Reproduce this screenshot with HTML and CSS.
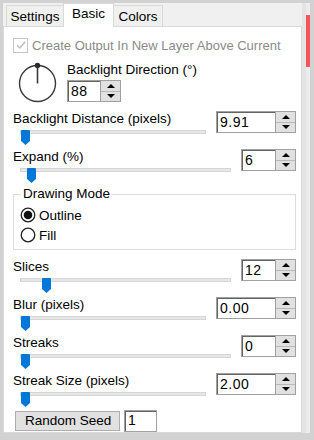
FILE: index.html
```html
<!DOCTYPE html>
<html>
<head>
<meta charset="utf-8">
<link rel="stylesheet" href="styles.css">
</head>
<body>
<div class="window">
  <div class="main">
    <div class="tabs">
      <div class="tab t-settings">Settings</div>
      <div class="tab t-basic sel">Basic</div>
      <div class="tab t-colors">Colors</div>
    </div>
    <div class="panel">
      <div class="check-row">
        <span class="cbox"><svg width="12" height="12" viewBox="0 0 12 12"><path d="M2 6.2 L4.8 9 L10.2 2.8" fill="none" stroke="#bdbdbd" stroke-width="1.4"/></svg></span>
        <span class="dis">Create Output In New Layer Above Current</span>
      </div>

      <div class="dial-row">
        <svg class="dial" width="40" height="42" viewBox="0 0 40 42">
          <circle cx="20.5" cy="21.5" r="18" fill="none" stroke="#3a3a3a" stroke-width="1.4"/>
          <line x1="20.5" y1="3.5" x2="20.5" y2="21.5" stroke="#3a3a3a" stroke-width="1.6"/>
          <circle cx="20.5" cy="3.5" r="2.7" fill="#2a2a2a"/>
        </svg>
        <div class="dial-side">
          <div class="label">Backlight Direction (°)</div>
          <div class="spin dialspin"><div class="val">88</div><div class="btns"><span class="up"></span><span class="dn"></span></div></div>
        </div>
      </div>

      <div class="srow">
        <div class="sl">
          <div class="label">Backlight Distance (pixels)</div>
          <div class="slider"><div class="track"></div><svg class="thumb" style="left:1px" width="9" height="15" viewBox="0 0 9 15"><path d="M1 0H8Q9 0 9 1V11L4.5 15L0 11V1Q0 0 1 0Z" fill="#0078d7"/></svg></div>
        </div>
        <div class="spin wide"><div class="val">9.91</div><div class="btns"><span class="up"></span><span class="dn"></span></div></div>
      </div>

      <div class="srow">
        <div class="sl">
          <div class="label">Expand (%)</div>
          <div class="slider"><div class="track"></div><svg class="thumb" style="left:7px" width="9" height="15" viewBox="0 0 9 15"><path d="M1 0H8Q9 0 9 1V11L4.5 15L0 11V1Q0 0 1 0Z" fill="#0078d7"/></svg></div>
        </div>
        <div class="spin narrow"><div class="val">6</div><div class="btns"><span class="up"></span><span class="dn"></span></div></div>
      </div>

      <div class="group">
        <div class="glabel">Drawing Mode</div>
        <div class="radio-row">
          <svg width="16" height="16" viewBox="0 0 16 16"><circle cx="8" cy="8" r="6.8" fill="#fff" stroke="#222" stroke-width="1.3"/><circle cx="8" cy="8" r="4.3" fill="#111"/></svg>
          <span>Outline</span>
        </div>
        <div class="radio-row">
          <svg width="16" height="16" viewBox="0 0 16 16"><circle cx="8" cy="8" r="6.8" fill="#fff" stroke="#222" stroke-width="1.3"/></svg>
          <span>Fill</span>
        </div>
      </div>

      <div class="srow first-after-group">
        <div class="sl">
          <div class="label">Slices</div>
          <div class="slider"><div class="track"></div><svg class="thumb" style="left:22px" width="9" height="15" viewBox="0 0 9 15"><path d="M1 0H8Q9 0 9 1V11L4.5 15L0 11V1Q0 0 1 0Z" fill="#0078d7"/></svg></div>
        </div>
        <div class="spin narrow"><div class="val">12</div><div class="btns"><span class="up"></span><span class="dn"></span></div></div>
      </div>

      <div class="srow">
        <div class="sl">
          <div class="label">Blur (pixels)</div>
          <div class="slider"><div class="track"></div><svg class="thumb" style="left:1px" width="9" height="15" viewBox="0 0 9 15"><path d="M1 0H8Q9 0 9 1V11L4.5 15L0 11V1Q0 0 1 0Z" fill="#0078d7"/></svg></div>
        </div>
        <div class="spin wide"><div class="val">0.00</div><div class="btns"><span class="up"></span><span class="dn"></span></div></div>
      </div>

      <div class="srow">
        <div class="sl">
          <div class="label">Streaks</div>
          <div class="slider"><div class="track"></div><svg class="thumb" style="left:1px" width="9" height="15" viewBox="0 0 9 15"><path d="M1 0H8Q9 0 9 1V11L4.5 15L0 11V1Q0 0 1 0Z" fill="#0078d7"/></svg></div>
        </div>
        <div class="spin narrow"><div class="val">0</div><div class="btns"><span class="up"></span><span class="dn"></span></div></div>
      </div>

      <div class="srow">
        <div class="sl">
          <div class="label">Streak Size (pixels)</div>
          <div class="slider"><div class="track"></div><svg class="thumb" style="left:1px" width="9" height="15" viewBox="0 0 9 15"><path d="M1 0H8Q9 0 9 1V11L4.5 15L0 11V1Q0 0 1 0Z" fill="#0078d7"/></svg></div>
        </div>
        <div class="spin wide"><div class="val">2.00</div><div class="btns"><span class="up"></span><span class="dn"></span></div></div>
      </div>

      <div class="seed-row">
        <div class="btn">Random Seed</div>
        <div class="seed-input">1</div>
      </div>
    </div>
  </div>
  <div class="side">
    <div class="side-light"></div>
    <div class="side-bar"><div class="side-red"></div></div>
  </div>
</div>
</body>
</html>
```

FILE: styles.css
```css
* { box-sizing: border-box; }
html, body { margin: 0; padding: 0; }
body {
  width: 314px;
  height: 440px;
  overflow: hidden;
  background: #d2d2d2;
  font-family: "Liberation Sans", Arial, sans-serif;
  font-size: 13.5px;
  color: #000;
}
.window {
  display: flex;
  padding: 3px 0 0 3px;
  height: 440px;
}
.main {
  width: 299px;
  height: 430px;
  display: flex;
  flex-direction: column;
  background: #f0f0f0;
}
.tabs {
  height: 23px;
  display: flex;
  align-items: flex-end;
  padding-left: 3px;
  flex: none;
}
.tab {
  height: 21px;
  border: 1px solid #d9d9d9;
  border-bottom: none;
  background: #f0f0f0;
  line-height: 15px;
  padding-top: 3px;
  text-align: center;
  margin-left: -1px;
}
.t-settings { width: 58px; margin-left: 0; }
.t-basic { width: 51px; }
.t-colors { width: 50px; }
.tab.sel {
  height: 24px;
  background: #fff;
  padding-top: 2px;
  margin-bottom: -1px;
  position: relative;
  z-index: 1;
}
.panel {
  flex: 1;
  background: #fff;
  border: 1px solid #d9d9d9;
  padding: 0 5px 0 9px;
  display: flex;
  flex-direction: column;
}
.label { line-height: 15px; height: 15px; white-space: nowrap; }

.check-row {
  margin-top: 10px;
  height: 16px;
  display: flex;
  align-items: center;
}
.cbox {
  width: 15px;
  height: 15px;
  border: 1px solid #c4c4c4;
  display: flex;
  align-items: center;
  justify-content: center;
  margin-right: 4px;
}
.dis { color: #8a8a8a; line-height: 15px; white-space: nowrap; font-size: 13px; }

.dial-row {
  margin-top: 9px;
  height: 42px;
  display: flex;
}
.dial { margin-left: 4px; flex: none; }
.dial-side { margin-left: 10px; display: flex; flex-direction: column; }
.dial-side .spin { margin-top: 3px; }

.srow {
  margin-top: 6px;
  height: 32px;
  display: grid;
  grid-template-columns: 1fr auto;
  column-gap: 10px;
  align-items: start;
}
.dial-row + .srow { margin-top: 7px; }
.srow.first-after-group { margin-top: 9px; }
.slider {
  position: relative;
  height: 15px;
  margin: 2px 0 0 7px;
}
.track {
  margin-top: 4px;
  height: 4px;
  background: #e7e7e7;
  border: 1px solid #d6d6d6;
}
.thumb { position: absolute; top: 0; }

.spin {
  display: flex;
  height: 22px;
  border: 1px solid #a0a0a0;
  background: #fff;
}
.spin.wide { width: 80px; }
.spin.narrow { width: 55px; }
.spin.dialspin { width: 54px; }
.val {
  flex: 1;
  border-top: 1px solid #646464;
  border-left: 1px solid #646464;
  padding-left: 2px;
  line-height: 19px;
  font-size: 14px;
  letter-spacing: 0.5px;
}
.btns {
  width: 20px;
  display: flex;
  flex-direction: column;
  border-left: 1px solid #a0a0a0;
}
.btns span {
  flex: 1;
  background: #e1e1e1;
  display: flex;
  align-items: center;
  justify-content: center;
}
.btns span.up { border-bottom: 1px solid #b8b8b8; }
.btns span::after {
  content: "";
  width: 0;
  height: 0;
  border-left: 4px solid transparent;
  border-right: 4px solid transparent;
}
.btns span.up::after { border-bottom: 4px solid #000; }
.btns span.dn::after { border-top: 4px solid #000; }

.group {
  position: relative;
  margin-top: 13px;
  height: 56px;
  border: 1px solid #dcdcdc;
  padding: 10px 0 0 6px;
}
.glabel {
  position: absolute;
  top: -9px;
  left: 7px;
  padding: 0 2px;
  background: #fff;
  line-height: 15px;
}
.radio-row {
  height: 20px;
  display: flex;
  align-items: center;
  gap: 3px;
}
.radio-row span { line-height: 15px; }

.seed-row {
  margin-top: 5px;
  display: flex;
  align-items: center;
  gap: 4px;
  padding-left: 2px;
}
.btn {
  width: 105px;
  height: 20px;
  background: #e1e1e1;
  border: 1px solid #adadad;
  line-height: 18px;
  padding-left: 9px;
}
.seed-input {
  width: 33px;
  height: 22px;
  border: 1px solid #a0a0a0;
  box-shadow: inset 1px 1px 0 #646464;
  padding-left: 3px;
  line-height: 19px;
  font-size: 14px;
}

.side {
  width: 12px;
  height: 430px;
  display: flex;
}
.side-light { width: 4px; background: #e4e4e4; }
.side-bar {
  width: 4px;
  background: #ececec;
  padding-top: 12px;
}
.side-red { height: 52px; background: #f0565a; }
```
